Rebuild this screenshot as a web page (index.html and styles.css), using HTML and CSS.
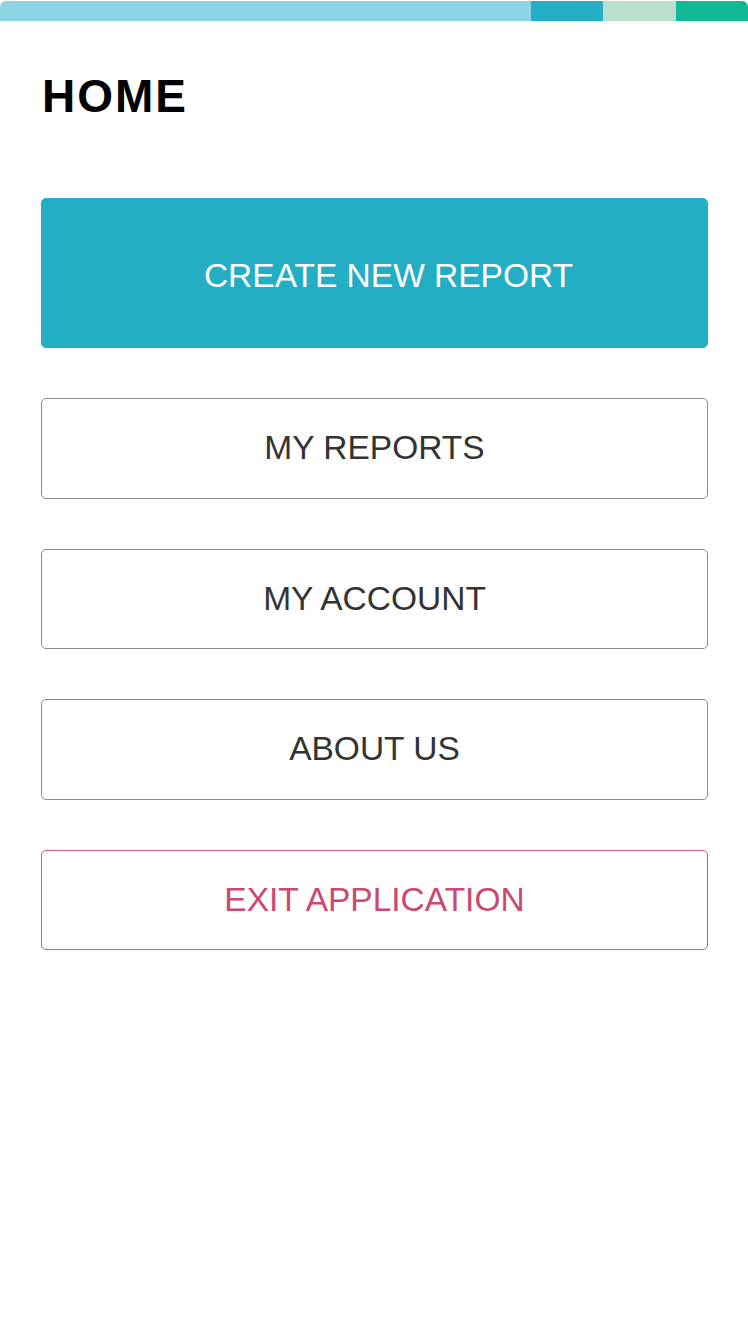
FILE: index.html
```html
<!DOCTYPE html>
<html lang="en">
<head>
    <meta charset="UTF-8">
    <title>Home</title>
    <link rel="stylesheet" href="styles.css">
</head>
<body>
    <div class="topbar">
        <span class="seg seg-main"></span>
        <span class="seg seg-teal"></span>
        <span class="seg seg-mint"></span>
        <span class="seg seg-green"></span>
    </div>

    <h1 class="title">HOME</h1>

    <div class="menu">
        <button class="btn btn-primary">CREATE NEW REPORT</button>
        <button class="btn">MY REPORTS</button>
        <button class="btn">MY ACCOUNT</button>
        <button class="btn">ABOUT US</button>
        <button class="btn btn-exit">EXIT APPLICATION</button>
    </div>
</body>
</html>
```

FILE: styles.css
```css
body {
    font-family: "Liberation Sans", Arial, sans-serif;
    margin: 0;
    background: #fff;
}

.topbar {
    display: flex;
    height: 20px;
    margin-top: 1px;
    border-radius: 6px 6px 0 0;
    overflow: hidden;
}

.seg {
    display: block;
    height: 100%;
}

.seg-main {
    flex: 1;
    background-color: #8cd5e5;
}

.seg-teal {
    width: 72px;
    background-color: #23aec5;
}

.seg-mint {
    width: 73px;
    background-color: #b8e0cc;
}

.seg-green {
    width: 72px;
    background-color: #13b895;
}

.title {
    margin: 52px 0 0 42px;
    font-size: 46px;
    line-height: 46px;
    font-weight: bold;
    letter-spacing: 2px;
    color: #000;
}

.menu {
    display: flex;
    flex-direction: column;
    gap: 50px;
    margin: 79px 40px 0 41px;
}

.btn {
    display: block;
    width: 100%;
    height: 100.5px;
    padding: 0;
    background: #fff;
    border: 1px solid #8a8a8a;
    border-radius: 5px;
    font-family: "Liberation Sans", Arial, sans-serif;
    font-size: 33.5px;
    color: #333;
    cursor: pointer;
}

.btn-primary {
    height: 150px;
    padding: 6px 0 0 28px;
    background-color: #24aec5;
    border-color: #24aec5;
    color: #fff;
}

.btn-exit {
    border-color: #d9577c;
    color: #cc4870;
}
```
